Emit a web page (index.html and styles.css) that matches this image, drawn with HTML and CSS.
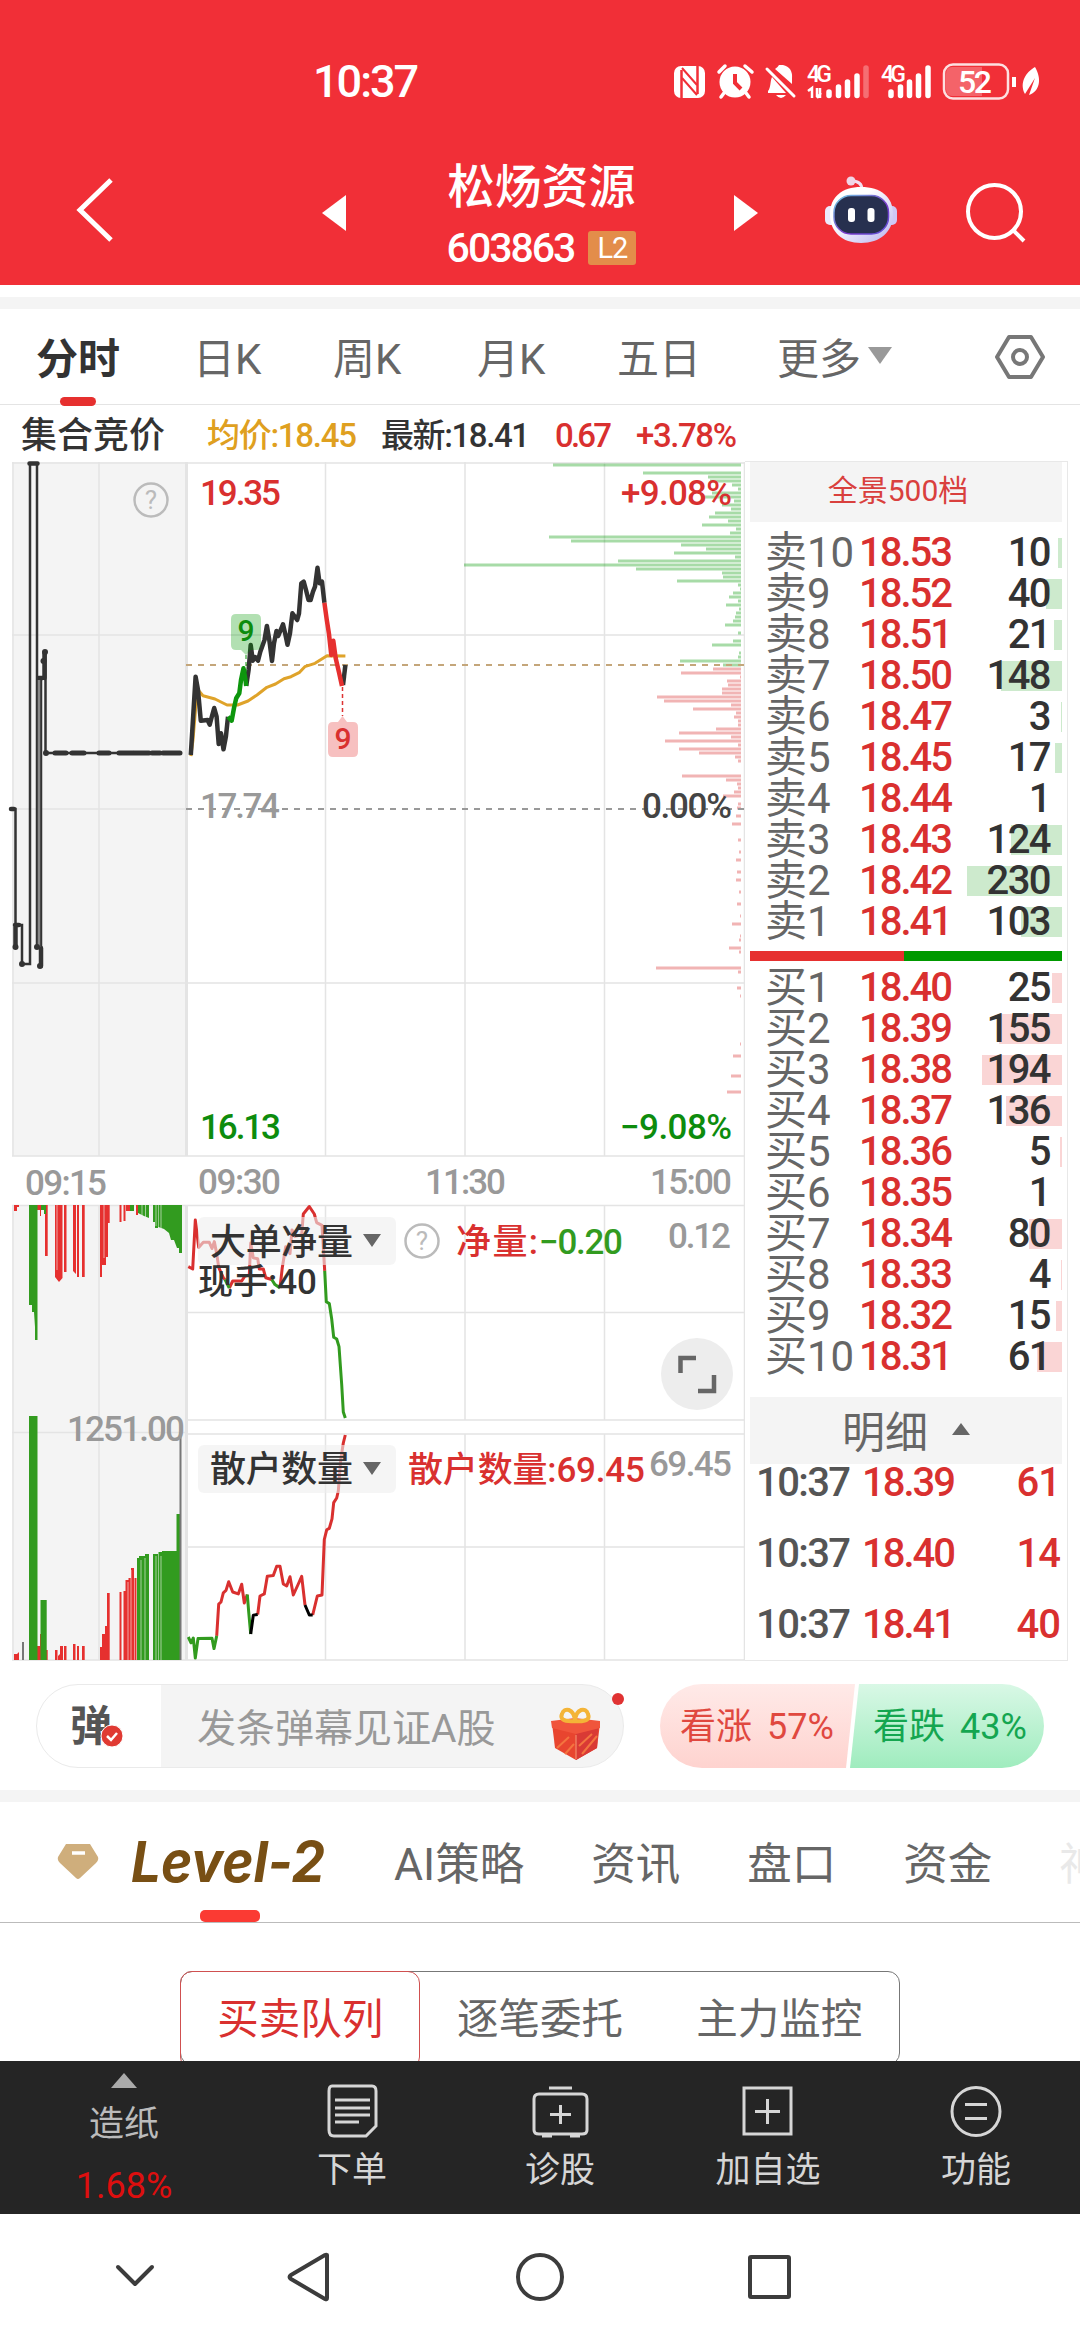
FILE: index.html
```html
<!DOCTYPE html>
<html lang="zh-CN">
<head>
  <meta charset="utf-8">
  <title>松炀资源 603863</title>
  <link rel="stylesheet" href="styles.css">
</head>
<body>
  <header class="topbar">
    <div class="status">
      <span class="clock">10:37</span>
      <svg class="status-icons" width="372" height="44" viewBox="670 58 372 44">
        <g fill="#fff">
          <rect x="674" y="65" width="31" height="32" rx="7"/>
          <path d="M681.500 69V97M697.500 65V93" stroke="#f12f37" stroke-width="2.500" fill="none"/>
          <path d="M682 67L697 84M682 77L697 94" stroke="#f12f37" stroke-width="2" fill="none"/>
          <circle cx="735" cy="81" r="15.500"/>
          <path d="M719 71L725 65M745 65L752 71M724 92L721 96M746 92L749 96" stroke="#fff" stroke-width="3.500" stroke-linecap="round"/>
          <path d="M735 73V82L741 88" stroke="#f12f37" stroke-width="4" fill="none"/>
          <path d="M768 90C771 87 770 80 772 76L786 92H768ZM775 68Q778 66 779 64H783Q793 66 792 78V83ZM776 94H786Q781 100 776 94Z"/>
          <path d="M767 68L794 95" stroke="#fff" stroke-width="3" stroke-linecap="round"/>
          <text x="807" y="81" class="net" textLength="25">4G</text>
          <text x="881" y="81" class="net" textLength="25">4G</text>
        </g>
        <g stroke="#fff" stroke-linecap="round" stroke-width="5.500">
          <path d="M829 91V94.500M838.500 86V94.500M847.500 81V94.500M857 75V94.500M891 91V94.500M900.500 86V94.500M909.500 81V94.500M918.500 75V94.500M928 67V94.500"/>
          <path d="M866 67V94.500" opacity=".3"/>
        </g>
        <path d="M808 90L812 87V97M820 97V87M817 96V87M817 97L821 92" stroke="#fff" stroke-width="2.500" fill="none"/>
        <rect x="944" y="63.500" width="64" height="34" rx="9" fill="none" stroke="#fff" stroke-opacity=".85" stroke-width="2.500"/>
        <path d="M952 66H982V95H952Q946 95 946 88V73Q946 66 952 66Z" fill="#fff" opacity=".25"/>
        <path d="M1014 76V86" stroke="#fff" stroke-width="4"/>
        <text x="958" y="92" class="battery" textLength="34">52</text>
        <path d="M1035 66C1042 78 1040 90 1029 94L1035 77L1025 93C1019 82 1026 71 1035 66Z" fill="#fff"/>
      </svg>
    </div>
    <div class="titlebar">
      <svg class="back" width="40" height="68" viewBox="0 0 40 68"><path d="M36 4L5 34L36 64" fill="none" stroke="#fff" stroke-width="5"/></svg>
      <svg class="prev" width="24" height="36" viewBox="0 0 24 36"><path d="M24 0V36L0 18Z" fill="#fff"/></svg>
      <div class="stock">
        <h1>松炀资源</h1>
        <p><span>603863</span><b>L2</b></p>
      </div>
      <svg class="next" width="24" height="36" viewBox="0 0 24 36"><path d="M0 0V36L24 18Z" fill="#fff"/></svg>
      <svg class="robot" width="74" height="70" viewBox="824 175 74 70">
        <defs>
          <linearGradient id="shell" x1="0" y1="0" x2="1" y2="1"><stop offset=".35" stop-color="#fff"/><stop offset="1" stop-color="#b9b3ee"/></linearGradient>
          <linearGradient id="rim" x1="0" y1="0" x2="1" y2="1"><stop offset="0" stop-color="#6fd0e4"/><stop offset=".6" stop-color="#7a37c9"/><stop offset="1" stop-color="#5a55d6"/></linearGradient>
        </defs>
        <path d="M852 181Q862 181 862 190" fill="none" stroke="#f3dff0" stroke-width="3"/>
        <circle cx="851" cy="181" r="4.500" fill="#f0d5e6"/>
        <rect x="825" y="206" width="12" height="19" rx="5" fill="#eceafd"/>
        <rect x="885" y="206" width="12" height="19" rx="5" fill="#cfc8f5"/>
        <path d="M861 187C881 187 893 197 893 214C893 232 880 243 861 243C842 243 830 232 830 214C830 197 842 187 861 187Z" fill="url(#shell)"/>
        <rect x="834" y="195.500" width="54.500" height="38.500" rx="17" fill="#27304f" stroke="url(#rim)" stroke-width="1.500"/>
        <rect x="848" y="208" width="7" height="14" rx="3" fill="#fff"/>
        <rect x="867.500" y="208" width="7" height="14" rx="3" fill="#fff"/>
      </svg>
      <svg class="search" width="62" height="62" viewBox="964 181 62 62"><g fill="none" stroke="#fff" stroke-width="4"><circle cx="994.500" cy="211.500" r="26.500"/><path d="M1013 230L1024 241"/></g></svg>
    </div>
  </header>

  <div class="band"></div>

  <nav class="tabs">
    <span class="active">分时</span>
    <span>日K</span>
    <span>周K</span>
    <span>月K</span>
    <span>五日</span>
    <span class="more">更多<i></i></span>
    <svg width="52" height="46" viewBox="0 0 52 46"><g fill="none" stroke="#777" stroke-width="4"><path d="M15 3H37L49 23L37 43H15L3 23Z" stroke-linejoin="round"/><circle cx="26" cy="23" r="7"/></g></svg>
  </nav>

  <main class="market">
    <svg class="charts" width="745" height="1254" viewBox="0 409 745 1254">
      <!-- quote line -->
      <text x="21" y="448" textLength="144" class="f36 dark">集合竞价</text>
      <text x="207" y="447" textLength="150" class="f33 gold">均价:18.45</text>
      <text x="381" y="447" textLength="149" class="f33 dark">最新:18.41</text>
      <text x="555" y="447" textLength="57" class="f33 red">0.67</text>
      <text x="636" y="447" textLength="101" class="f33 red">+3.78%</text>

      <!-- grids -->
      <rect x="12" y="462" width="175" height="694" fill="#f4f4f4"/>
      <rect x="12" y="1205" width="175" height="455" fill="#f4f4f4"/>
      <g class="grid">
        <path d="M13 462V1156M99 462V1156M12 463H744M12 1156H744M12 635H744M12 809H186M12 983H744M325.500 462V1156M465 462V1156M604.500 462V1156"/>
        <path d="M13 1205V1660M99 1205V1660M12 1205.500H744M12 1432.500H186M187 1312.500H744M187 1420H744M187 1434H744M187 1547H744M12 1660H1068M325.500 1205V1420M465 1205V1420M604.500 1205V1420M325.500 1434V1660M465 1434V1660M604.500 1434V1660"/>
        <path d="M744.500 462V1660"/>
        <path d="M186.500 462V1156M186.500 1205V1660" stroke-width="3"/>
      </g>

      <!-- price distribution -->
      <path class="vol-green" d="M741 465H553M741 473H643M741 477H708M741 481H710M741 485H732M741 489H738M741 493H712M741 497H702M741 501H734M741 505H722M741 509H731M741 513H715M741 517H709M741 521H728M741 525H702M741 529H736M741 533H730M741 537H549M741 541H571M741 545H681M741 549H706M741 553H674M741 557H735M741 561H618M741 565H464M741 569H636M741 573H722M741 577H723M741 581H677M741 585H738M741 589H740M741 593H733M741 597H729M741 601H738M741 605H726M741 609H739M741 613H736M741 617H735M741 621H733M741 625H725M741 633H738M741 641H733M741 645H712M741 653H739M741 657H738M741 661H680M741 665H723"/>
      <path class="vol-red" d="M741 669H713M741 673H681M741 677H740M741 681H727M741 685H728M741 689H722M741 693H722M741 697H657M741 701H664M741 705H731M741 709H693M741 713H736M741 717H734M741 721H738M741 725H738M741 729H716M741 733H679M741 737H731M741 741H665M741 745H738M741 749H679M741 753H699M741 757H735M741 761H738M741 776H682M741 780H726M741 784H737M741 788H738M741 792H734M741 796H723M741 804H738M741 808H737M741 816H736M741 824H732M741 840H738M741 852H739M741 860H736M741 872H737M741 880H736M741 892H739M741 904H737M741 916H740M741 924H732M741 936H740M741 940H739M741 948H729M741 952H739M741 968H656M741 972H738M741 988H737M741 996H740M741 1044H740M741 1056H733M741 1076H731M741 1092H727"/>

      <path d="M186 665H744" stroke="#c4a67a" stroke-width="2" stroke-dasharray="6 6"/>
      <path d="M186 809H744" stroke="#999" stroke-width="2" stroke-dasharray="6 6"/>

      <!-- call auction -->
      <g fill="none" stroke="#333" stroke-width="2.500">
        <path d="M12 809H15.500V947V925H22V964H30V463.600H37V947H41V966V678H45.500V652V753H181"/>
        <path d="M11 809H14M15.500 925V947M15 925H19M29.500 463.600H37.500M38.500 678H42.500M41 948V966M44.500 653V678" stroke-width="4.500" stroke-linecap="round"/>
        <path d="M39 680V947" stroke="#888"/>
        <path d="M55 753H66M72 753H84M99 753H109M119 753H133M134 753H149M152 753H160M163 753H180" stroke-width="5" stroke-linecap="round"/>
      </g>
      <g fill="#333"><circle cx="15.500" cy="947" r="3"/><circle cx="22" cy="964" r="3"/><circle cx="37" cy="947" r="3"/><circle cx="40" cy="966" r="3"/><circle cx="45" cy="652" r="3"/><circle cx="43.500" cy="661" r="3"/><circle cx="46" cy="753" r="3"/></g>

      <!-- average and price -->
      <polyline class="line" stroke="#dfa32a" points="190.800,756 193,740 196.300,700 199,691 203,695.700 215,699 227,705 237.600,705 248,701 257,695 266.900,687.300 275.500,684 284,678.700 291,676.700 299.600,672.300 304.800,666.700 315,663.300 327,655.700 345.400,656"/>
      <polyline class="line thick" stroke="#333" points="190.800,755 195.600,676.700 198,690 200.800,720.700 207.600,720 209.700,724.700 211.800,716.700 214.200,708 216.600,716.700 218.700,744 221,733.300 223.500,749.300 225.900,736.700 228,716.700"/>
      <polyline class="line thick" stroke="#333" points="246.200,686 248.600,670 250.700,645 252.800,660.700 255,657 258,660.700 260.300,651.700 264.500,640 266.900,626 269.300,640 272,661 274,643.300 276.500,631 278.200,636 283,624.300 285.500,635 287.500,644.700 290,633.300 292.400,613.300 297.200,620 299,613.300 301.300,583.300 303.700,581.700 306,590 308.500,600 310.600,600 313,591.700 315,586.700 317.500,567.700 319.600,583.300 322,581.700 324.400,602.700"/>
      <polyline class="line thick" stroke="#333" points="343,685 345.400,665"/>
      <polyline class="line thick" stroke="#0d960d" points="228,716.700 231.700,720.700 234,708 236.200,698.300 239.300,693.300 241,680 243.500,668.300 245.500,680 246.200,686"/>
      <polyline class="line thick" stroke="#e6302f" points="324.400,602.700 326.800,620 328.900,633.300 331.300,655 333.300,640.700 335.700,658.300 339.200,673.300 342,686"/>
      <path d="M246 655V672" stroke="#0d960d" stroke-dasharray="4 3"/>
      <path d="M342.500 687V716" stroke="#d33" stroke-width="1.500" stroke-dasharray="4 3"/>
      <path d="M236 614H256Q261 614 261 619V645Q261 650 256 650H251L246 655L241 650H236Q231 650 231 645V619Q231 614 236 614Z" fill="#090" fill-opacity=".3"/>
      <path d="M333 722H338L342.500 716L347 722H353Q358 722 358 727V752Q358 757 353 757H333Q328 757 328 752V727Q328 722 333 722Z" fill="#e6302f" fill-opacity=".3"/>
      <text x="246" y="641" text-anchor="middle" class="tag green">9</text>
      <text x="343" y="749" text-anchor="middle" class="tag red">9</text>

      <text x="200" y="505" textLength="81" class="f35 red">19.35</text>
      <text x="621" y="505" textLength="111" class="f35 red">+9.08%</text>
      <text x="200" y="818" textLength="80" class="f35 gray">17.74</text>
      <text x="642" y="818" textLength="90" class="f35" fill="#444">0.00%</text>
      <text x="200" y="1139" textLength="81" class="f35 green">16.13</text>
      <text x="620" y="1139" textLength="112" class="f35 green">−9.08%</text>
      <g class="help"><circle cx="151" cy="500" r="16.500"/><text x="151" y="509" text-anchor="middle">?</text></g>

      <text x="25" y="1195" textLength="82" class="f35 gray">09:15</text>
      <text x="198" y="1194" textLength="83" class="f35 gray">09:30</text>
      <text x="425" y="1194" textLength="81" class="f35 gray">11:30</text>
      <text x="650" y="1194" textLength="82" class="f35 gray">15:00</text>

      <!-- auction volume, upper panel -->
      <path fill="#e6302f" d="M14 1205H19V1207H17V1211H14ZM37 1205H41V1216H40V1210H37ZM45 1205H47.700V1256H45ZM55 1205H62.500V1278L59 1282L55 1277ZM64 1205H66.500V1272H64ZM73 1205H76V1274L73 1271ZM77 1205H79V1277H77ZM82 1205H84.700V1277H82ZM100 1205H108V1222H108V1257H106V1265H102V1277H100ZM108 1205H109.700V1223H108ZM119.500 1205H121.500V1222H119.500ZM123.500 1205H125.500V1221H123.500ZM126 1205H130V1211H126ZM136 1205H138V1215H136Z"/>
      <path fill="#329b1f" d="M29 1205H37.500V1340H35V1327L34 1312H32V1305H29ZM41 1205H46V1214H44V1210H41ZM130 1205H134V1211H130ZM138 1205H149V1218L144 1216L138 1213ZM153 1205H158V1228H155V1222H153ZM158.500 1205H182V1253H179V1248H177L174 1240H171L169 1233L164 1229L158.500 1227Z"/>

      <!-- auction volume, lower panel -->
      <path fill="#e6302f" d="M14 1654H17L19 1652V1660H14ZM37 1646H40V1634H41V1660H37ZM45 1650H47.700V1660H45ZM55 1650H57.500V1660H55ZM58 1656L60 1654V1646H63V1660H58ZM64 1646H66.500V1660H64ZM73 1644H75.500V1660H73ZM77 1646H79V1660H77ZM82 1646H84.700V1660H82ZM100 1647H102V1634H105V1626H107V1593H109.700V1660H100ZM119.500 1592H121.500V1660H119.500ZM123.500 1591H125.500V1580H128.500V1578H131V1568H134V1660H123.500ZM134.500 1578H136.500V1660H134.500Z"/>
      <path fill="#329b1f" d="M29 1416H37.500V1660H29ZM40.500 1600H46.700V1660H40.500ZM137 1558H139V1556H145V1554H149V1660H137ZM153 1554H158V1660H153ZM158.500 1552H162V1551H176.500V1514H180V1660H158.500Z"/>
      <path fill="#777" d="M22 1642H24V1660H22ZM179.500 1432H181.500V1660H179.500Z"/>
      <path stroke="#f4f4f4" opacity=".6" d="M57 1205V1270M104 1205V1258M142 1205V1218M145.500 1205V1217M156 1205V1226M161 1205V1228M128 1582V1660M131 1570V1660M141 1560V1660M145 1558V1660M156 1556V1660M161 1556V1660"/>
      <text x="67" y="1441" textLength="118" class="f35 gray">1251.00</text>

      <!-- big order net volume -->
      <g class="line" fill="none" stroke="#d9302f">
        <polyline points="188.300,1266.700 192.700,1269 195.300,1220 198.700,1247.400 203.300,1242.300 209.300,1242.300 212,1248.500 214.300,1241.600 216.700,1253.600 218.700,1267.400 223.300,1277.700 225,1279.500"/>
        <polyline points="229.300,1288 232.700,1281 241.700,1281 245,1276 249.300,1275 250.700,1243 253.300,1257.800 257.700,1258.800 259.300,1269 263.300,1269 265.700,1277.700 271.700,1279.500"/>
        <polyline points="280,1288 282.300,1267.400 285.700,1246.700 290,1253.600 292,1230 295,1236.400 301.700,1234.700 303.300,1214 309.300,1206.500 314.300,1214 316.700,1222.600 322,1225.400 324.700,1270.900"/>
      </g>
      <g class="line" fill="none" stroke="#329b1f">
        <polyline points="225,1279.500 229.300,1288"/>
        <polyline points="271.700,1279.500 275,1284.600 280,1288"/>
        <polyline points="324.700,1270.900 326.300,1301.800 329.300,1303.600 331.700,1319 333.700,1337.300 336.700,1339 339,1346.600 341.700,1384.500 343.300,1412 345.300,1418"/>
      </g>

      <!-- retail holders -->
      <g class="line" fill="none" stroke="#d9302f">
        <polyline points="216.700,1635.900 218.700,1604.200 221,1602 223.300,1592.800 226,1590.400 228.700,1581.800 232.700,1592 238.300,1593.900 241.700,1584.200 244.300,1603 247.300,1594.500"/>
        <polyline points="257.700,1614.500 260,1596 264.300,1593.900 267.300,1576.300 273.300,1575.600 276.700,1566.300 280,1566.300 283.300,1584 286.700,1586 290,1576.700 293.300,1595 298.300,1584 301.700,1576.300 305,1605"/>
        <polyline points="312.700,1615 317.300,1596 322,1595 324.300,1539.500 326.700,1529.800 329.300,1528.400 332,1518.800 333.700,1502.600 336.700,1498 338.300,1491 340.700,1460 343.300,1443 345.300,1435"/>
      </g>
      <polyline class="line" stroke="#329b1f" points="188.300,1637 191,1642.800 193.300,1638 195.300,1658 198,1638.600 212,1638.300 214,1648.600 216.700,1635.900"/>
      <polyline class="line" stroke="#329b1f" points="247.300,1594.500 248.700,1611.800 250.700,1634"/>
      <polyline class="line" stroke="#000" points="250.700,1634 253.300,1615.200 257.700,1614.500"/>
      <polyline class="line" stroke="#000" points="305,1605 309.300,1615 312.700,1615"/>

      <!-- indicator selectors -->
      <rect x="198" y="1217" width="198" height="48" rx="6" fill="#eee" fill-opacity=".6"/>
      <rect x="198" y="1445" width="198" height="48" rx="6" fill="#eee" fill-opacity=".6"/>
      <text x="210" y="1255" textLength="143" class="f36 dark">大单净量</text>
      <text x="210" y="1482" textLength="143" class="f36 dark">散户数量</text>
      <path d="M363 1234H381L372 1247ZM363 1462H381L372 1475Z" fill="#666"/>
      <text x="198" y="1294" textLength="119" class="f35 dark">现手:40</text>
      <g class="help"><circle cx="422" cy="1241" r="16.500"/><text x="422" y="1250" text-anchor="middle">?</text></g>
      <text x="456" y="1254" textLength="82" class="f35 red">净量:</text>
      <text x="539" y="1254" textLength="84" class="f35" fill="#329b1f">−0.20</text>
      <text x="668" y="1248" textLength="63" class="f35 gray">0.12</text>
      <text x="408" y="1482" textLength="237" class="f35 red">散户数量:69.45</text>
      <text x="649" y="1476" textLength="83" class="f35 gray">69.45</text>
      <circle cx="697" cy="1374" r="36" fill="#ededed"/>
      <path d="M680.500 1373V1358H696M714 1375V1391H698" fill="none" stroke="#666" stroke-width="4.500"/>
    </svg>

    <aside class="book">
      <div class="panorama">全景500档</div>
      <ul class="levels sell">
        <li><span>卖10</span><b>18.53</b><em>10</em><i style="width:4px"></i></li>
        <li><span>卖9</span><b>18.52</b><em>40</em><i style="width:16px"></i></li>
        <li><span>卖8</span><b>18.51</b><em>21</em><i style="width:8px"></i></li>
        <li><span>卖7</span><b>18.50</b><em>148</em><i style="width:61px"></i></li>
        <li><span>卖6</span><b>18.47</b><em>3</em><i style="width:1px"></i></li>
        <li><span>卖5</span><b>18.45</b><em>17</em><i style="width:7px"></i></li>
        <li><span>卖4</span><b>18.44</b><em>1</em></li>
        <li><span>卖3</span><b>18.43</b><em>124</em><i style="width:51px"></i></li>
        <li><span>卖2</span><b>18.42</b><em>230</em><i style="width:95px"></i></li>
        <li><span>卖1</span><b>18.41</b><em>103</em><i style="width:41px"></i></li>
      </ul>
      <div class="ratio"><i style="width:154px"></i></div>
      <ul class="levels buy">
        <li><span>买1</span><b>18.40</b><em>25</em><i style="width:10px"></i></li>
        <li><span>买2</span><b>18.39</b><em>155</em><i style="width:63px"></i></li>
        <li><span>买3</span><b>18.38</b><em>194</em><i style="width:80px"></i></li>
        <li><span>买4</span><b>18.37</b><em>136</em><i style="width:56px"></i></li>
        <li><span>买5</span><b>18.36</b><em>5</em><i style="width:2px"></i></li>
        <li><span>买6</span><b>18.35</b><em>1</em></li>
        <li><span>买7</span><b>18.34</b><em>80</em><i style="width:33px"></i></li>
        <li><span>买8</span><b>18.33</b><em>4</em><i style="width:1px"></i></li>
        <li><span>买9</span><b>18.32</b><em>15</em><i style="width:6px"></i></li>
        <li><span>买10</span><b>18.31</b><em>61</em><i style="width:25px"></i></li>
      </ul>
      <div class="detail-head">明细<i></i></div>
      <ul class="ticks">
        <li><span>10:37</span><b>18.39</b><em>61</em></li>
        <li><span>10:37</span><b>18.40</b><em>14</em></li>
        <li><span>10:37</span><b>18.41</b><em>40</em></li>
      </ul>
    </aside>
  </main>

  <section class="social">
    <div class="danmu">
      <div class="danmu-toggle">弹
        <svg class="check" width="24" height="24" viewBox="0 0 24 24"><circle cx="12" cy="12" r="11" fill="#e03a33" stroke="#fff"/><path d="M7 12L11 16L17 9" fill="none" stroke="#fff" stroke-width="2.500"/></svg>
      </div>
      <div class="danmu-input">发条弹幕见证A股</div>
      <svg class="gift" width="52" height="56" viewBox="550 1710 52 56">
        <path d="M552 1727L576 1723L600 1727L597 1752L576 1764L555 1752Z" fill="#e8452f"/>
        <path d="M576 1736L598 1732L597 1752L576 1764Z" fill="#d93a35"/>
        <path d="M551 1725L575 1722L600 1725V1732L576 1738L552 1732Z" fill="#f0553c"/>
        <path d="M576 1739V1763" stroke="#f79a77"/>
        <path d="M582 1758L597 1740M579 1750L592 1738M557 1752L569 1741M565 1758L574 1748" stroke="#f4743f" stroke-width="2"/>
        <path d="M575 1725C562 1726 560 1722 562 1718C564 1711 574 1712 575 1725C576 1712 586 1711 588 1718C590 1723 587 1726 575 1725Z" fill="none" stroke="#f4b437" stroke-width="4"/>
      </svg>
      <i class="dot"></i>
    </div>
    <div class="vote">
      <div class="up">看涨 57%</div>
      <div class="down">看跌 43%</div>
    </div>
  </section>

  <div class="band"></div>

  <nav class="sections">
    <svg class="gem" width="44" height="44" viewBox="56 1840 44 44"><path d="M66 1844H90L98 1857Q99 1860 96 1863L80 1878Q78 1880 76 1878L60 1863Q57 1860 58 1857Z" fill="#cfae7c"/><path d="M72 1853H85" stroke="#fff" stroke-width="3.500"/></svg>
    <svg class="level" width="224" height="76" viewBox="120 1824 224 76"><text x="131" y="1882" textLength="194" lengthAdjust="spacingAndGlyphs">Level-2</text></svg>
    <span>AI策略</span>
    <span>资讯</span>
    <span>盘口</span>
    <span>资金</span>
    <span class="faded">神</span>
  </nav>

  <section class="queue">
    <div class="segment">
      <span class="on">买卖队列</span>
      <span>逐笔委托</span>
      <span>主力监控</span>
    </div>
  </section>

  <footer class="actions">
    <div class="sector">
      <i></i>
      <span>造纸</span>
      <b>1.68%</b>
    </div>
    <div class="action">
      <svg width="56" height="56" viewBox="0 0 56 56"><path d="M8 3H48Q52 3 52 8V43L42 53H10Q5 53 5 47V8Q5 3 8 3ZM11 17H46M11 25H46M11 32H46M11 39H35"/></svg>
      <span>下单</span>
    </div>
    <div class="action">
      <svg width="60" height="56" viewBox="0 0 60 56"><path d="M19 5H42M9 11H52Q57 11 57 16V47Q57 51 52 51H9Q4 51 4 47V16Q4 11 9 11ZM30.500 22V41M20 31.500H41M12 53H22M40 53H50"/></svg>
      <span>诊股</span>
    </div>
    <div class="action">
      <svg width="56" height="56" viewBox="0 0 56 56"><path d="M4 5H51V51H4ZM27.500 16V41M15 28.500H40"/></svg>
      <span>加自选</span>
    </div>
    <div class="action">
      <svg width="56" height="56" viewBox="0 0 56 56"><circle cx="28" cy="28.500" r="24"/><path d="M17 21.500H39M17 35.500H39"/></svg>
      <span>功能</span>
    </div>
  </footer>

  <div class="sysnav">
    <svg width="680" height="56" viewBox="112 2249 680 56">
      <g fill="none" stroke="#3c3c3c" stroke-width="4" stroke-linejoin="round">
        <path d="M118 2267L135 2284L152 2267" stroke-linecap="round"/>
        <path d="M327 2255V2298Q327 2300 325 2299L291 2279Q288 2277 291 2275L325 2255Q327 2254 327 2256Z"/>
        <circle cx="540" cy="2277" r="22"/>
        <rect x="750" y="2257" width="39" height="40" rx="1"/>
      </g>
    </svg>
  </div>
</body>
</html>
```
FILE: styles.css
```css
* {
  box-sizing: border-box;
  margin: 0;
  padding: 0;
}
body {
  width: 1080px;
  height: 2340px;
  overflow: hidden;
  background: #fff;
  color: #333;
  font-family: Roboto, "Noto Sans CJK SC", sans-serif;
}
ul {
  list-style: none;
}
em {
  font-style: normal;
}
svg {
  display: block;
  flex: none;
}

/* header */
.topbar {
  height: 285px;
  background: #f12f37;
  color: #fff;
}
.status {
  display: flex;
  align-items: center;
  justify-content: space-between;
  height: 160px;
  padding: 1px 38px 0 313px;
}
.clock {
  padding-top: 2px;
  font-size: 45px;
  font-weight: 500;
  letter-spacing: -2px;
}
.net {
  font-size: 23px;
  font-weight: 500;
}
.battery {
  font-size: 32px;
  font-weight: 500;
  fill: #fff;
}
.titlebar {
  display: flex;
  align-items: center;
  height: 108px;
  margin-top: -6px;
  padding-left: 75px;
}
.back {
  margin: 4px 207px 0 0;
}
.prev,
.next {
  margin-top: 10px;
}
.stock {
  width: 387px;
  margin: 16px 0 0 1px;
  padding-left: 2px;
  text-align: center;
}
.stock h1 {
  font-size: 47px;
  font-weight: 500;
  line-height: 54px;
}
.stock p {
  display: flex;
  align-items: center;
  justify-content: center;
  gap: 14px;
  margin-top: 9px;
  height: 50px;
  font-size: 41px;
  font-weight: 500;
  letter-spacing: -2px;
}
.stock b {
  width: 48px;
  height: 34px;
  border-radius: 3px;
  background: #e38d4a;
  font-size: 29px;
  font-weight: 400;
  line-height: 35px;
  letter-spacing: -1px;
}
.robot {
  margin: 4px 66px 0 66px;
}
.search {
  margin-top: 8px;
}
.band {
  height: 12px;
  background: #f4f4f4;
}
.topbar + .band {
  margin-top: 12px;
}

/* period tabs */
.tabs {
  display: grid;
  grid-template-columns: 157px 140px 144px 140px 160px 217px 52px;
  align-items: center;
  height: 96px;
  padding-left: 36px;
  border-bottom: 1px solid #e4e4e4;
  color: #666;
  font-size: 42px;
}
.tabs span {
  margin-top: -3px;
}
.tabs .active {
  position: relative;
  color: #333;
  font-weight: 700;
}
.tabs .active::after {
  content: "";
  position: absolute;
  left: 24px;
  bottom: -20px;
  width: 36px;
  height: 9px;
  border-radius: 5px;
  background: #e6302f;
}
.more {
  display: flex;
  align-items: center;
  gap: 7px;
}
.more i {
  border: 12px solid transparent;
  border-top: 17px solid #999;
  border-bottom: 0;
}

/* charts */
.market {
  display: flex;
  height: 1257px;
  padding-top: 4px;
}
.f33 { font-size: 33px; }
.f35 { font-size: 35px; }
.f36 { font-size: 36px; }
.charts text {
  font-weight: 500;
  font-family: Roboto, "Noto Sans CJK SC", sans-serif;
}
.dark { fill: #333; }
.red { fill: #d9302f; }
.green { fill: #0d8c0d; }
.gold { fill: #dfa020; }
.gray { fill: #999; }
.tag { font-size: 30px; }
.grid {
  fill: none;
  stroke: #e4e4e4;
  stroke-width: 1.500;
}
.vol-green {
  stroke: #0a9a0a;
  stroke-opacity: .36;
  stroke-width: 3;
}
.vol-red {
  stroke: #d93030;
  stroke-opacity: .36;
  stroke-width: 3;
}
.line {
  fill: none;
  stroke-width: 3;
  stroke-linejoin: round;
}
.thick {
  stroke-width: 4.500;
}
.help circle {
  fill: none;
  stroke: #bbb;
  stroke-width: 2.500;
}
.charts .help text {
  fill: #bbb;
  font-size: 26px;
  font-weight: 400;
}

/* order book */
.book {
  width: 323px;
  height: 1200px;
  margin-top: 52px;
  padding: 0 5px;
  border: 1px solid #e8e8e8;
  border-left: 0;
}
.panorama {
  height: 60px;
  background: #f4f4f4;
  color: #d9403d;
  font-size: 30px;
  line-height: 58px;
  text-align: center;
  padding-right: 16px;
}
.levels {
  padding-top: 10px;
}
.levels li {
  position: relative;
  display: grid;
  grid-template-columns: 94px 100px 1fr;
  align-items: center;
  height: 41px;
  padding: 0 12px 0 15px;
  font-size: 40px;
  line-height: 41px;
}
.levels span {
  color: #666;
  font-size: 42px;
  white-space: nowrap;
}
.levels b,
.ticks b {
  color: #d9302f;
  font-weight: 500;
  letter-spacing: -2px;
}
.levels em {
  z-index: 1;
  font-weight: 500;
  letter-spacing: -1.600px;
  text-align: right;
}
.levels i {
  position: absolute;
  right: 0;
  top: 6px;
  height: 30px;
}
.sell i { background: #cdeacd; }
.buy i { background: #fad5d5; }
.ratio {
  height: 10px;
  margin-top: 9px;
  background: #009900;
}
.ratio i {
  display: block;
  height: 10px;
  background: #e6302f;
}
.buy {
  padding-top: 6px;
}
.detail-head {
  display: flex;
  align-items: center;
  justify-content: center;
  gap: 24px;
  height: 67px;
  margin-top: 20px;
  padding-bottom: 4px;
  background: #f4f4f4;
  color: #666;
  font-size: 43px;
}
.detail-head i {
  border: 9px solid transparent;
  border-top: 0;
  border-bottom: 12px solid #666;
}
.ticks {
  margin-top: -17px;
}
.ticks li {
  display: grid;
  grid-template-columns: 106px 100px 1fr;
  align-items: center;
  height: 71px;
  padding: 0 2px 0 6px;
  color: #555;
  font-size: 40px;
}
.ticks span {
  font-weight: 500;
  letter-spacing: -1.600px;
}
.ticks em {
  color: #d9302f;
  font-weight: 500;
  letter-spacing: -1px;
  text-align: right;
}

/* comments and vote */
.social {
  display: flex;
  height: 128px;
  padding: 22px 36px 0;
}
.danmu {
  position: relative;
  display: flex;
  align-items: center;
  width: 588px;
  height: 84px;
  border: 1px solid #eaeaea;
  border-radius: 42px;
  background: linear-gradient(90deg, #fff 124px, #f4f4f4 124px);
}
.danmu-toggle {
  position: relative;
  width: 125px;
  margin-top: -8px;
  padding-left: 33px;
  color: #555;
  font-size: 42px;
  font-weight: 700;
}
.check {
  position: absolute;
  left: 63px;
  bottom: 5px;
}
.danmu-input {
  width: 388px;
  margin-top: -3px;
  padding-left: 35px;
  color: #999;
  font-size: 39px;
  white-space: nowrap;
}
.gift {
  margin-top: 16px;
}
.dot {
  position: absolute;
  right: -1px;
  top: 8px;
  width: 12px;
  height: 12px;
  border-radius: 50%;
  background: #e03232;
}
.vote {
  display: flex;
  width: 384px;
  height: 84px;
  margin-left: 36px;
  border-radius: 42px;
  overflow: hidden;
  font-size: 36px;
  line-height: 86px;
  white-space: pre;
  word-spacing: 6px;
}
.vote .up {
  width: 195px;
  padding-left: 20px;
  background: linear-gradient(#ffeae8, #fed3cf);
  clip-path: polygon(0 0, 100% 0, 186px 100%, 0 100%);
  color: #e0483f;
}
.vote .down {
  width: 194px;
  margin-left: -5px;
  padding-left: 23px;
  background: linear-gradient(#d9f8e6, #9fecbe);
  clip-path: polygon(9px 0, 100% 0, 100% 100%, 0 100%);
  color: #14a650;
}

/* section tabs */
.sections {
  position: relative;
  display: flex;
  align-items: center;
  height: 121px;
  padding-left: 56px;
  border-bottom: 1px solid #bbb;
  color: #666;
  font-size: 44.500px;
  white-space: nowrap;
  overflow: hidden;
}
.sections::after {
  content: "";
  position: absolute;
  left: 200px;
  bottom: 0;
  width: 60px;
  height: 12px;
  border-radius: 5px;
  background: #fb3a33;
}
.level {
  margin: 0 50px 0 20px;
}
.level text {
  font-family: Inter, sans-serif;
  font-size: 56px;
  font-style: italic;
  font-weight: 700;
  fill: #784f14;
}
.sections span {
  margin: -3px 67px 0 0;
}
.sections .faded {
  color: #e9e9e9;
}

.queue {
  height: 138px;
  padding: 48px 180px 0;
  overflow: hidden;
}
.segment {
  display: grid;
  grid-template-columns: repeat(3, 1fr);
  height: 94px;
  border: 1px solid #777;
  border-radius: 12px;
}
.segment span {
  color: #666;
  font-size: 41.500px;
  line-height: 96px;
  text-align: center;
}
.segment .on {
  margin: -1px 0 -1px -1px;
  border: 1px solid #d05050;
  border-radius: 12px;
  color: #d9302f;
}

/* bottom bars */
.actions {
  display: grid;
  grid-template-columns: 248px repeat(4, 208px);
  height: 153px;
  background: #252525;
  color: #d6d6d6;
  font-size: 35px;
}
.sector {
  display: flex;
  flex-direction: column;
  align-items: center;
  padding-top: 12px;
  color: #bbb;
}
.sector i {
  border: 13px solid transparent;
  border-top: 0;
  border-bottom: 15px solid #aaa;
}
.sector span {
  margin-top: 12px;
  line-height: 50px;
}
.sector b {
  margin-top: 11px;
  color: #dd0f0f;
  font-size: 36px;
  font-weight: 400;
  line-height: 50px;
}
.action {
  display: flex;
  flex-direction: column;
  align-items: center;
  padding-top: 22px;
}
.action svg {
  fill: none;
  stroke: #d6d6d6;
  stroke-width: 3;
}
.action span {
  margin-top: 7px;
  line-height: 50px;
}
.sysnav {
  padding: 35px 0 0 112px;
}
```
